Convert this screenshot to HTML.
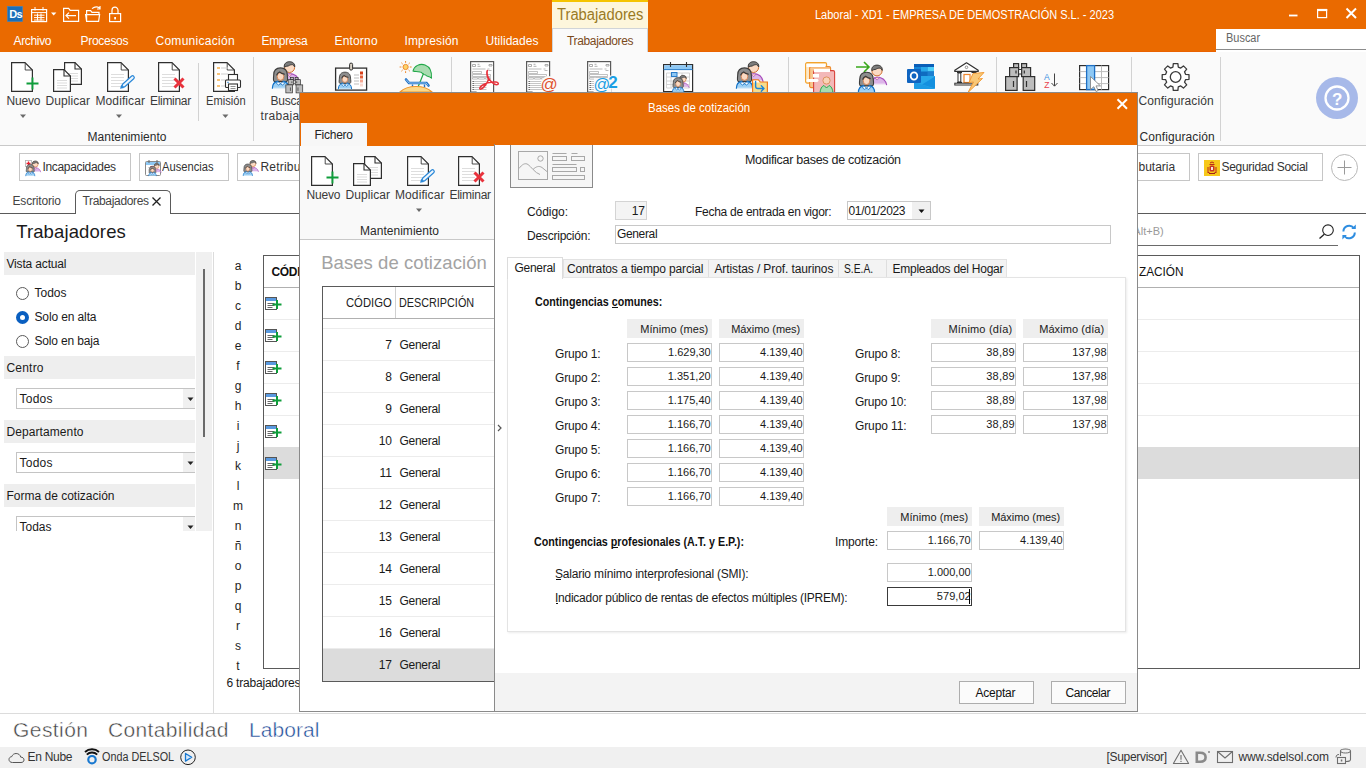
<!DOCTYPE html>
<html lang="es">
<head>
<meta charset="utf-8">
<title>Laboral - XD1 - EMPRESA DE DEMOSTRACIÓN S.L. - 2023</title>
<style>
*{box-sizing:border-box;margin:0;padding:0}
html,body{width:1366px;height:768px;overflow:hidden;background:#fff}
body{font-family:"Liberation Sans",sans-serif;font-size:12px;color:#262626;position:relative}
.a{position:absolute}
.t{position:absolute;white-space:pre;line-height:1}
svg{position:absolute;overflow:visible}
/* ---------- main title bar ---------- */
#tb{left:0;top:0;width:1366px;height:52px;background:#ea6a00}
.mt{color:#fff;font-size:12.5px;top:35px}
/* ---------- ribbon ---------- */
#rb{left:0;top:52px;width:1366px;height:94px;background:#fafafa;border-bottom:1px solid #c9c9c9}
.rl{font-size:12px;color:#3c3c3c;top:95px}
.vs{position:absolute;width:1px;background:#d2d2d2}
.btn{position:absolute;top:153px;height:28px;border:1px solid #c6c6c6;background:#fff}
.btn .t{top:7px;font-size:12px;color:#333}
/* ---------- left panel ---------- */
.ph{position:absolute;left:4px;width:191px;height:23px;background:#eee}
.ph .t{left:3px;top:5px;font-size:12px;color:#1e1e1e}
.rd{position:absolute;left:16px;width:13px;height:13px;border:1px solid #5a5a5a;border-radius:50%;background:#fff}
.cb{position:absolute;left:16px;width:179px;height:21px;border:1px solid #c4c4c4;border-right:none;background:#fff}
.cb .t{left:3px;top:4px;font-size:12px;letter-spacing:.4px;color:#1e1e1e}
.cb i{position:absolute;right:0;top:0;width:12px;height:19px;background:#f0f0f0}
.cb i:after{content:"";position:absolute;left:3px;top:9px;border:3px solid transparent;border-top:3px solid #222;border-bottom:none}
.lt{position:absolute;left:232px;width:12px;text-align:center;font-size:12px;color:#1e1e1e;line-height:1}
/* ---------- dialog ---------- */
#dlg{left:299px;top:92px;width:839px;height:620px;background:#fff;border:1px solid #8a8a8a}
.in{position:absolute;height:18px;border:1px solid #c4c4c4;background:#fff;font-size:12px;text-align:right;padding:1px 3px 0 0;line-height:14px;color:#1a1a1a;white-space:pre}
.hd{position:absolute;height:18px;background:#efefef;font-size:12px;text-align:right;padding:2px 4px 0 0;line-height:14px;color:#1a1a1a;white-space:pre}
.lb{position:absolute;font-size:12px;color:#1a1a1a;white-space:pre;line-height:1;letter-spacing:.3px}
.row{position:absolute;left:0;width:171px;height:32px;border-bottom:1px solid #ebebeb;font-size:12px;color:#1e1e1e}
</style>
</head>
<body>
<svg width="0" height="0" style="left:0;top:0"><defs><linearGradient id="gb" x1="0" y1="0" x2="0" y2="1"><stop offset=".72" stop-color="#9dd0f4"/><stop offset="1" stop-color="#9dd0f4" stop-opacity="0"/></linearGradient><linearGradient id="gp" x1="0" y1="0" x2="0" y2="1"><stop offset=".7" stop-color="#dcb4e8"/><stop offset="1" stop-color="#dfb8ea" stop-opacity="0"/></linearGradient></defs></svg>
<div id="tb" class="a"></div>
<div class="a" style="left:0;top:51px;width:1366px;height:1px;background:#ea6200"></div>
<div class="a" style="left:0;top:52px;width:1366px;height:1px;background:#d3dae2"></div>
<div class="a" style="left:0;top:53px;width:1366px;height:1px;background:#fff"></div>
<div class="a" style="left:0;top:51px;width:66px;height:1px;background:#ea6a00"></div>
<div class="a" style="left:0;top:52px;width:66px;height:1px;background:#ea6200"></div>
<div class="a" style="left:552px;top:0;width:96px;height:28px;background:#fdf6dc;border-top:2px solid #f5c400"></div>
<div class="a" style="left:552px;top:28px;width:96px;height:25px;background:#fafafa;border:1px solid #d0d4d8;border-bottom:none"></div>
<div class="t" style="transform:scaleX(0.923);transform-origin:0 0;left:557.28px;top:7px;font-size:16px;color:#9a7a24">Trabajadores</div>
<div class="t" style="letter-spacing:-0.33px;left:566.96px;top:35px;color:#7a4a1c">Trabajadores</div>
<div class="t" style="letter-spacing:-0.32px;left:13.46px;top:35px;color:#fff">Archivo</div>
<div class="t" style="letter-spacing:-0.28px;left:80.46px;top:35px;color:#fff">Procesos</div>
<div class="t" style="letter-spacing:0.28px;left:155.46px;top:35px;color:#fff">Comunicación</div>
<div class="t" style="letter-spacing:-0.32px;left:261.46px;top:35px;color:#fff">Empresa</div>
<div class="t" style="letter-spacing:0.18px;left:334.46px;top:35px;color:#fff">Entorno</div>
<div class="t" style="letter-spacing:0.17px;left:404.46px;top:35px;color:#fff">Impresión</div>
<div class="t" style="letter-spacing:0.04px;left:485.46px;top:35px;color:#fff">Utilidades</div>
<div class="t" style="transform:scaleX(0.917);transform-origin:0 0;left:815.46px;top:9px;color:#fff">Laboral - XD1 - EMPRESA DE DEMOSTRACIÓN S.L. - 2023</div>
<div class="a" style="left:1216px;top:29px;width:150px;height:21px;background:#fff;border-bottom:1px solid #8c8c8c"></div>
<div class="a" style="left:1216px;top:50px;width:150px;height:2px;background:#fff"></div>
<div class="t" style="transform:scaleX(0.913);transform-origin:0 0;left:1226.46px;top:32px;color:#666">Buscar</div>
<svg width="1366" height="60" viewBox="0 0 1366 60" style="left:0;top:0"><rect x="7.500" y="6.500" width="15" height="15" fill="#1a6fb8" stroke="#3a86c8" stroke-width=".6"/><text x="9.300" y="18.400" font-family="Liberation Sans" font-size="11" fill="#fff" font-weight="bold" letter-spacing="-.8">Ds</text><rect x="31.6" y="9.600" width="15" height="12" fill="none" stroke="#fff" stroke-width="1.2"/><path d="M31.6 12.600h15M35 7v3.500M43 7v3.500M34 15.200h10.500M34 17.600h10.500M34 20h10.500M37.500 13.500v7M41 13.500v7" fill="none" stroke="#fff"  stroke-width="1"/><path d="M51 12.500h5.400l-2.700 3z" fill="#fff"/><path d="M63.600 21.400v-13h5l1.600 2h8.400v11z" fill="none" stroke="#fff" stroke-width="1.2"/><path d="M76 15.600h-10M69 12.600l-3 3 3 3" fill="none" stroke="#fff" stroke-width="1.2"/><path d="M86.600 21.400v-10.800h4l1.400 1.800h7v2M85.600 14.600h14l-1 6.800h-12z" fill="none" stroke="#fff" stroke-width="1.2"/><path d="M92 8.600c2.500-2 5.500-2 7.500-.6M100 6v3h-3" fill="none" stroke="#fff" stroke-width="1.2"/><rect x="109.600" y="13.600" width="11" height="8" fill="none" stroke="#fff" stroke-width="1.2"/><path d="M112 13.600v-3.400a3 3 0 0 1 6 0v3.400" fill="none" stroke="#fff" stroke-width="1.2"/><rect x="114.200" y="17" width="1.800" height="2.400" fill="#fff"/><path d="M1289 15.500h8.500" stroke="#fff" stroke-width="1.800"/><rect x="1317.600" y="9.600" width="9" height="8" fill="none" stroke="#fff" stroke-width="1.200"/><path d="M1317 10h10.200" stroke="#fff" stroke-width="2.200"/><path d="M1346.500 8.500l9.500 9.500M1356 8.500l-9.500 9.500" stroke="#fff" stroke-width="2"/></svg>
<div id="rb" class="a"></div>
<div class="vs" style="left:198px;top:63px;height:58px"></div>
<div class="vs" style="left:253px;top:57px;height:84px"></div>
<div class="vs" style="left:451px;top:57px;height:84px"></div>
<div class="vs" style="left:788px;top:57px;height:84px"></div>
<div class="vs" style="left:996px;top:57px;height:84px"></div>
<div class="vs" style="left:1131px;top:57px;height:84px"></div>
<div class="vs" style="left:1220px;top:57px;height:84px"></div>
<div class="t" style="letter-spacing:-0.15px;left:6.46px;top:95px;color:#3a3a3a">Nuevo</div>
<div class="t" style="letter-spacing:0.08px;left:45.46px;top:95px;color:#3a3a3a">Duplicar</div>
<div class="t" style="letter-spacing:0.11px;left:95.46px;top:95px;color:#3a3a3a">Modificar</div>
<div class="t" style="letter-spacing:-0.32px;left:150.06px;top:95px;color:#3a3a3a">Eliminar</div>
<div class="t" style="transform:scaleX(0.927);transform-origin:0 0;left:205.96px;top:95px;color:#3a3a3a">Emisión</div>
<div class="t" style="letter-spacing:-0.25px;left:270.46px;top:95px;color:#3a3a3a">Buscar</div>
<div class="t" style="letter-spacing:0.34px;left:260.46px;top:110px;color:#3a3a3a">trabajador</div>
<div class="t" style="letter-spacing:0.03px;left:87.46px;top:131px;color:#2a2a2a">Mantenimiento</div>
<div class="t" style="letter-spacing:0.09px;left:1138.46px;top:95px;color:#3a3a3a">Configuración</div>
<div class="t" style="letter-spacing:0.09px;left:1139.46px;top:131px;color:#2a2a2a">Configuración</div>
<svg width="1366" height="150" viewBox="0 0 1366 150" style="left:0;top:0"><path d="M20 114.500h6l-3 3.400z" fill="#6a6a6a"/><path d="M116 114.500h6l-3 3.400z" fill="#6a6a6a"/><path d="M222.4 114.500h6l-3 3.400z" fill="#6a6a6a"/><g transform="translate(11,62)"><path d="M.6.6h13.400l7.400 7.400v21.400H.6z" fill="#fff" stroke="#2f2f2f" stroke-width="1.200" stroke-linejoin="miter"/><path d="M14.200 1v7h7" fill="none" stroke="#3a3a3a" stroke-width=".9"/><path d="M21.5 15.5v12M15.5 21.5h12" stroke="#0f9d3b" stroke-width="1.9" fill="none"/></g><g transform="translate(64,62)"><path d="M.6.6h10.4l6.4 6.4v15.4H.6z" fill="#fff" stroke="#2f2f2f" stroke-width="1.2"/><path d="M11 .6v6.4h6.4" fill="none" stroke="#2f2f2f" stroke-width="1.1"/><path d="M4 11.5h10M4 14h10M4 16.5h10M4 19h10" stroke="#dcdcdc" stroke-width="1"/></g><g transform="translate(53,69)"><path d="M.6.6h10.4l6.4 6.4v15.4H.6z" fill="#fff" stroke="#2f2f2f" stroke-width="1.2"/><path d="M11 .6v6.4h6.4" fill="none" stroke="#2f2f2f" stroke-width="1.1"/><path d="M4 11.5h10M4 14h10M4 16.5h10M4 19h10" stroke="#dcdcdc" stroke-width="1"/></g><g transform="translate(107,62)"><path d="M.6.6h13.400l7.400 7.400v21.400H.6z" fill="#fff" stroke="#2f2f2f" stroke-width="1.200" stroke-linejoin="miter"/><path d="M14.200 1v7h7" fill="none" stroke="#3a3a3a" stroke-width=".9"/><path d="M4 12.5h13M4 15.5h13M4 18.5h13M4 21.5h13M4 24.5h13" stroke="#dedede" stroke-width="1"/><g transform="translate(20.5,20) rotate(-42)"><path d="M-10 0l3.500-2.200v4.400z" fill="#2b88d8"/><rect x="-6.500" y="-1.700" width="15" height="3.400" rx="1.700" fill="#eef6fd" stroke="#2b88d8" stroke-width="1.200"/></g></g><g transform="translate(158,62)"><path d="M.6.6h13.400l7.400 7.400v21.400H.6z" fill="#fff" stroke="#2f2f2f" stroke-width="1.200" stroke-linejoin="miter"/><path d="M14.200 1v7h7" fill="none" stroke="#3a3a3a" stroke-width=".9"/><path d="M4 12.5h13M4 15.5h13M4 18.5h13M4 21.5h13M4 24.5h13" stroke="#dedede" stroke-width="1"/><path d="M16.5 16.5l9 9M25.5 16.5l-9 9" stroke="#e8323c" stroke-width="3" fill="none"/></g><g transform="translate(213,62)"><path d="M.6.6h13.400l7.400 7.400v21.400H.6z" fill="#fff" stroke="#2f2f2f" stroke-width="1.200" stroke-linejoin="miter"/><path d="M14.200 1v7h7" fill="none" stroke="#3a3a3a" stroke-width=".9"/><path d="M4 6h3" stroke="#f39a1e" stroke-width="1.2"/><path d="M8 6h7" stroke="#cfcfcf" stroke-width="1"/><path d="M4 12h3" stroke="#f39a1e" stroke-width="1.2"/><path d="M8 12h7" stroke="#cfcfcf" stroke-width="1"/><path d="M4 18h3" stroke="#f39a1e" stroke-width="1.2"/><path d="M8 18h7" stroke="#cfcfcf" stroke-width="1"/><path d="M4 24h3" stroke="#f39a1e" stroke-width="1.2"/><path d="M8 24h7" stroke="#cfcfcf" stroke-width="1"/><rect x="15.5" y="12.5" width="9" height="6" fill="#fff" stroke="#2f2f2f" stroke-width="1.1"/><rect x="12.5" y="18" width="15" height="7.5" rx="1" fill="#fff" stroke="#2f2f2f" stroke-width="1.1"/><rect x="15.5" y="22" width="9" height="6.5" fill="#fff" stroke="#2f2f2f" stroke-width="1.1"/><path d="M17.5 24.5h5M17.5 26.5h5" stroke="#777" stroke-width=".8"/><path d="M14.2 20.3h1.6" stroke="#2b88d8" stroke-width="1"/></g><g transform="translate(272,60)"><g transform="translate(11,7.6)"><path d="M1 14.200C1 9 3 6.600 6.500 6.200C11.500 6.200 15.200 9 16.200 14.200" fill="url(#gp)" stroke="#a64bbb" stroke-width="1.100"/><path d="M4 6.500l2.600 2.600 2.800-2.900z" fill="#fbdac3" stroke="#a64bbb" stroke-width=".7"/><circle cx="6.500" cy="-.2" r="5.100" fill="#fbdac3" stroke="#cf6f30" stroke-width="1"/><path d="M1.300 -.4C.8 -3.600 3 -5.900 6.500 -5.900C10 -5.900 12.200 -3.600 11.700 -.6C11.300 -1.800 10.600 -2.600 9.600 -2.900C8 -3 6.500 -2.600 5.400 -1.700C4 -1.500 2.400 -1.300 1.300 -.4z" fill="#7d7d7d" stroke="#3a3a3a" stroke-width="1" stroke-linejoin="round"/></g><g transform="translate(0,7.7)"><path d="M8.500 .2C3.600 .2 1.700 3.400 1.700 7.400C1.700 10.400 .5 12.400 2.300 13.900H14.700C16.500 12.400 15.300 10.400 15.300 7.400C15.300 3.400 13.400 .2 8.500 .2z" fill="#8e8e8e" stroke="#3c3c3c" stroke-width="1.100"/><ellipse cx="8.500" cy="8.700" rx="3.300" ry="3.900" fill="#fbdac3" stroke="#d8733a" stroke-width=".7"/><path d="M4.800 7.200C5.300 5.600 6.600 4.600 7.600 4.300C8.600 5.200 10.400 6.200 12.200 6.500" fill="none" stroke="#3c3c3c" stroke-width="1.300" stroke-linecap="round"/><path d="M.4 21.500C.4 16.500 2.200 14.300 5.600 13.700l2.900 2.300 2.900-2.300c3.400 .6 5.200 2.800 5.200 7.800z" fill="url(#gb)"/><path d="M.4 20.500C.5 16.300 2.300 14.300 5.600 13.700M11.400 13.700c3.300 .6 5.100 2.600 5.200 6.800" fill="none" stroke="#1272c8" stroke-width="1.200" stroke-linecap="round"/><path d="M5.600 13.700l2.900 2.300 2.900-2.300 1 2.300-2.300 1.500-1.600-1.700-1.600 1.700-2.300-1.500z" fill="#fff" stroke="#1272c8" stroke-width=".8" stroke-linejoin="round"/></g></g><g transform="translate(285.5,77) scale(0.58)"><g transform="translate(0,0)"><rect x="8.600" y=".6" width="5" height="4" fill="#bdbdbd" stroke="#2f2f2f" stroke-width="1.200"/><rect x="16.600" y=".6" width="5" height="4" fill="#bdbdbd" stroke="#2f2f2f" stroke-width="1.200"/><rect x="4.600" y="4.600" width="9" height="9" fill="#bdbdbd" stroke="#2f2f2f" stroke-width="1.200"/><rect x="16.600" y="4.600" width="9" height="9" fill="#bdbdbd" stroke="#2f2f2f" stroke-width="1.200"/><rect x="13.600" y="6.500" width="3" height="4.500" fill="#fff" stroke="#2f2f2f" stroke-width="1"/><rect x=".6" y="13.600" width="11.500" height="13.800" fill="#bdbdbd" stroke="#2f2f2f" stroke-width="1.200"/><rect x="18.200" y="13.600" width="11.500" height="13.800" fill="#bdbdbd" stroke="#2f2f2f" stroke-width="1.200"/><path d="M8.500 18v6M21.500 18v6M11 7.500v3M19.300 7.500v3" stroke="#2f2f2f" stroke-width="1.200"/></g></g><g transform="translate(335,62.5)"><rect x=".6" y="5.600" width="31" height="22" fill="#fff" stroke="#2f2f2f" stroke-width="1.3"/><rect x="14.600" y=".6" width="3" height="7" rx="1.4" fill="#d8d0c4" stroke="#2f2f2f" stroke-width="1"/><g transform="translate(3,9.5) scale(0.82)"><path d="M8.500 .2C3.600 .2 1.700 3.400 1.700 7.400C1.700 10.400 .5 12.400 2.300 13.900H14.700C16.500 12.400 15.300 10.400 15.300 7.400C15.300 3.400 13.400 .2 8.500 .2z" fill="#8e8e8e" stroke="#3c3c3c" stroke-width="1.100"/><ellipse cx="8.500" cy="8.700" rx="3.300" ry="3.900" fill="#fbdac3" stroke="#d8733a" stroke-width=".7"/><path d="M4.800 7.200C5.300 5.600 6.600 4.600 7.600 4.300C8.600 5.200 10.400 6.200 12.200 6.500" fill="none" stroke="#3c3c3c" stroke-width="1.300" stroke-linecap="round"/><path d="M.4 21.500C.4 16.500 2.200 14.300 5.600 13.700l2.900 2.300 2.900-2.300c3.400 .6 5.200 2.800 5.200 7.800z" fill="url(#gb)"/><path d="M.4 20.500C.5 16.300 2.300 14.300 5.600 13.700M11.400 13.700c3.300 .6 5.100 2.600 5.200 6.800" fill="none" stroke="#1272c8" stroke-width="1.200" stroke-linecap="round"/><path d="M5.600 13.700l2.900 2.300 2.900-2.300 1 2.300-2.300 1.500-1.600-1.700-1.600 1.700-2.300-1.500z" fill="#fff" stroke="#1272c8" stroke-width=".8" stroke-linejoin="round"/></g><path d="M19 12.500h5M19 15.500h5M19 18.500h5M19 21.500h5" stroke="#bdbdbd" stroke-width="1"/><rect x="25" y="9" width="3" height="3" fill="#d8401a"/><rect x="25" y="13" width="3" height="3" fill="#e8603a"/><rect x="25" y="17" width="3" height="3" fill="#f5a58f"/><rect x="25" y="21" width="3" height="3" fill="#fad8cf"/></g><g transform="translate(400,60)"><circle cx="5.600" cy="7" r="2.600" fill="#fbd26a" stroke="#f08a2c" stroke-width="1"/><path d="M9.8 7L11.6 7" stroke="#f08a2c" stroke-width="1"/><path d="M1.4 7L-0.4 7" stroke="#f08a2c" stroke-width="1"/><path d="M5.6 11.2L5.6 13" stroke="#f08a2c" stroke-width="1"/><path d="M5.6 2.8L5.6 1" stroke="#f08a2c" stroke-width="1"/><path d="M8.54 9.94L9.8 11.2" stroke="#f08a2c" stroke-width="1"/><path d="M2.66 9.94L1.4 11.2" stroke="#f08a2c" stroke-width="1"/><path d="M8.54 4.06L9.8 2.8" stroke="#f08a2c" stroke-width="1"/><path d="M2.66 4.06L1.4 2.8" stroke="#f08a2c" stroke-width="1"/><path d="M13 11C14 6 20 3 25 5C30 7 32 12 31.400 18C29 16 27 17 25.600 15C23 15 22 12 20 12C17 11 15 12 13 11z" fill="#a8dcb0" stroke="#22a84a" stroke-width="1.1"/><path d="M23.500 13.500L18 27" stroke="#22a84a" stroke-width="1.2"/><path d="M6 19.500l3 3.500h17.500l2 2.500" fill="none" stroke="#1f6fc4" stroke-width="2.600" stroke-linecap="round"/><path d="M6.300 19.800l2.800 3.200h17l1.800 2.200" fill="none" stroke="#9fd0f6" stroke-width=".9" stroke-linecap="round"/><path d="M12.500 24.500v3M24.500 24.500v3" stroke="#1f6fc4" stroke-width="1.4"/><path d="M0 32C4 28 10 26.500 16 26.500C22 26.500 28 28 32 32z" fill="#fbd98a" stroke="#f0962c" stroke-width="1.1"/></g><g transform="translate(470,61)"><rect x=".6" y=".6" width="23" height="33" fill="#fff" stroke="#5a5a5a" stroke-width="1.2"/><path d="M2.500 3.500h3v2h-3zM7.500 3.300h2M7.500 5.300h3M19 3.500h3v1.500h-3z" stroke="#9a9a9a" stroke-width=".8" fill="none"/><path d="M2.500 8h13M17.500 8h2M18.500 9.500h3" stroke="#a8a8a8" stroke-width=".8"/><path d="M2.500 10.500h9v2h-9zM2.500 13.500h18v2h-18zM2.500 16.500h5v1.600h-5zM8.500 16.500h6v1.600h-6zM15.500 16.500h5v1.600h-5z" stroke="#a8a8a8" stroke-width=".7" fill="none"/><path d="M2.500 20.5h14" stroke="#b8b8b8" stroke-width=".8"/><path d="M2.500 20.5h1.500" stroke="#666" stroke-width=".9"/><path d="M2.500 22.5h14" stroke="#b8b8b8" stroke-width=".8"/><path d="M2.500 22.5h1.500" stroke="#666" stroke-width=".9"/><path d="M2.500 24.5h14" stroke="#b8b8b8" stroke-width=".8"/><path d="M2.500 24.5h1.500" stroke="#666" stroke-width=".9"/><path d="M2.500 26.5h14" stroke="#b8b8b8" stroke-width=".8"/><path d="M2.500 26.5h1.500" stroke="#666" stroke-width=".9"/><path d="M2.500 28.5h14" stroke="#b8b8b8" stroke-width=".8"/><path d="M2.500 28.5h1.500" stroke="#666" stroke-width=".9"/><path d="M.6 31h6v3" fill="none" stroke="#5a5a5a" stroke-width="1"/></g><g transform="translate(470,61)"><path d="M17.500 9.500c-1.500 1-.5 6 1 9c-1.500 4-5 9-7.500 9.600c-2 .4-1.500-2 1-3.600c4-2.600 9-4 14-3.400c3 .4 3 2.600 .5 2.600c-3 0-8-5-9-9c-.8-3-.3-5.600 0-5.200z" fill="none" stroke="#e8323c" stroke-width="1.500" stroke-linejoin="round"/></g><g transform="translate(526,61)"><rect x=".6" y=".6" width="23" height="33" fill="#fff" stroke="#5a5a5a" stroke-width="1.2"/><path d="M2.500 3.500h3v2h-3zM7.500 3.300h2M7.500 5.300h3M19 3.500h3v1.500h-3z" stroke="#9a9a9a" stroke-width=".8" fill="none"/><path d="M2.500 8h13M17.500 8h2M18.500 9.500h3" stroke="#a8a8a8" stroke-width=".8"/><path d="M2.500 10.500h9v2h-9zM2.500 13.500h18v2h-18zM2.500 16.500h5v1.600h-5zM8.500 16.500h6v1.600h-6zM15.500 16.500h5v1.600h-5z" stroke="#a8a8a8" stroke-width=".7" fill="none"/><path d="M2.500 20.5h14" stroke="#b8b8b8" stroke-width=".8"/><path d="M2.500 20.5h1.500" stroke="#666" stroke-width=".9"/><path d="M2.500 22.5h14" stroke="#b8b8b8" stroke-width=".8"/><path d="M2.500 22.5h1.500" stroke="#666" stroke-width=".9"/><path d="M2.500 24.5h14" stroke="#b8b8b8" stroke-width=".8"/><path d="M2.500 24.5h1.500" stroke="#666" stroke-width=".9"/><path d="M2.500 26.5h14" stroke="#b8b8b8" stroke-width=".8"/><path d="M2.500 26.5h1.500" stroke="#666" stroke-width=".9"/><path d="M2.500 28.5h14" stroke="#b8b8b8" stroke-width=".8"/><path d="M2.500 28.5h1.500" stroke="#666" stroke-width=".9"/><path d="M.6 31h6v3" fill="none" stroke="#5a5a5a" stroke-width="1"/></g><g transform="translate(526,61)"><circle cx="22.500" cy="22.500" r="7.500" fill="#fafafa"/><text x="14.500" y="29" font-family="Liberation Sans" font-size="17" fill="#e0522e">@</text></g><g transform="translate(587,61)"><rect x=".6" y=".6" width="23" height="33" fill="#fff" stroke="#5a5a5a" stroke-width="1.2"/><path d="M2.500 3.500h3v2h-3zM7.500 3.300h2M7.500 5.300h3M19 3.500h3v1.500h-3z" stroke="#9a9a9a" stroke-width=".8" fill="none"/><path d="M2.500 8h13M17.500 8h2M18.500 9.500h3" stroke="#a8a8a8" stroke-width=".8"/><path d="M2.500 10.500h9v2h-9zM2.500 13.500h18v2h-18zM2.500 16.500h5v1.600h-5zM8.500 16.500h6v1.600h-6zM15.500 16.500h5v1.600h-5z" stroke="#a8a8a8" stroke-width=".7" fill="none"/><path d="M2.500 20.5h14" stroke="#b8b8b8" stroke-width=".8"/><path d="M2.500 20.5h1.500" stroke="#666" stroke-width=".9"/><path d="M2.500 22.5h14" stroke="#b8b8b8" stroke-width=".8"/><path d="M2.500 22.5h1.500" stroke="#666" stroke-width=".9"/><path d="M2.500 24.5h14" stroke="#b8b8b8" stroke-width=".8"/><path d="M2.500 24.5h1.500" stroke="#666" stroke-width=".9"/><path d="M2.500 26.5h14" stroke="#b8b8b8" stroke-width=".8"/><path d="M2.500 26.5h1.500" stroke="#666" stroke-width=".9"/><path d="M2.500 28.5h14" stroke="#b8b8b8" stroke-width=".8"/><path d="M2.500 28.5h1.500" stroke="#666" stroke-width=".9"/><path d="M.6 31h6v3" fill="none" stroke="#5a5a5a" stroke-width="1"/></g><g transform="translate(587,61)"><rect x="7" y="17" width="17" height="14" fill="#fafafa"/><rect x="22" y="14.500" width="9" height="13" fill="#fafafa"/><text x="6.500" y="29" font-family="Liberation Sans" font-size="16.500" fill="#1b9fe4">@</text><text x="21.300" y="26.500" font-family="Liberation Sans" font-weight="bold" font-size="17" fill="#1b9fe4">2</text></g><g transform="translate(663,60)"><rect x=".6" y="4.600" width="29" height="27" fill="#fff" stroke="#2f2f2f" stroke-width="1.2"/><rect x="1.200" y="5.200" width="27.800" height="4.300" fill="#8ec8f4"/><path d="M.6 9.600h29" stroke="#2b7cc8" stroke-width="1"/><path d="M7.500 2v5M23.500 2v5" stroke="#2f2f2f" stroke-width="1.1"/><path d="M3.500 13h23v15h-23zM3.500 17h23M3.500 21h23M3.500 24.500h23M8 13v15M13.500 13v15M19 13v15" fill="none" stroke="#cfcfcf" stroke-width=".9"/><rect x="8.500" y="12.500" width="5.500" height="4" fill="#8ec8f4" stroke="#2b7cc8" stroke-width="1"/><g transform="translate(16,19) scale(0.62)"><path d="M1 14.200C1 9 3 6.600 6.500 6.200C11.500 6.200 15.200 9 16.200 14.200" fill="url(#gp)" stroke="#a64bbb" stroke-width="1.100"/><path d="M4 6.500l2.600 2.600 2.800-2.900z" fill="#fbdac3" stroke="#a64bbb" stroke-width=".7"/><circle cx="6.500" cy="-.2" r="5.100" fill="#fbdac3" stroke="#cf6f30" stroke-width="1"/><path d="M1.300 -.4C.8 -3.600 3 -5.900 6.500 -5.900C10 -5.900 12.200 -3.600 11.700 -.6C11.300 -1.800 10.600 -2.600 9.600 -2.900C8 -3 6.500 -2.600 5.400 -1.700C4 -1.500 2.400 -1.300 1.300 -.4z" fill="#7d7d7d" stroke="#3a3a3a" stroke-width="1" stroke-linejoin="round"/></g><g transform="translate(9,17.5) scale(0.72)"><path d="M8.500 .2C3.600 .2 1.700 3.400 1.700 7.400C1.700 10.400 .5 12.400 2.300 13.900H14.700C16.500 12.400 15.300 10.400 15.300 7.400C15.300 3.400 13.400 .2 8.500 .2z" fill="#8e8e8e" stroke="#3c3c3c" stroke-width="1.100"/><ellipse cx="8.500" cy="8.700" rx="3.300" ry="3.900" fill="#fbdac3" stroke="#d8733a" stroke-width=".7"/><path d="M4.800 7.200C5.300 5.600 6.600 4.600 7.600 4.300C8.600 5.200 10.400 6.200 12.200 6.500" fill="none" stroke="#3c3c3c" stroke-width="1.300" stroke-linecap="round"/><path d="M.4 21.500C.4 16.500 2.200 14.300 5.600 13.700l2.900 2.300 2.900-2.300c3.400 .6 5.200 2.800 5.200 7.800z" fill="url(#gb)"/><path d="M.4 20.500C.5 16.300 2.300 14.300 5.600 13.700M11.400 13.700c3.300 .6 5.100 2.600 5.200 6.800" fill="none" stroke="#1272c8" stroke-width="1.200" stroke-linecap="round"/><path d="M5.600 13.700l2.900 2.300 2.900-2.300 1 2.300-2.300 1.500-1.600-1.700-1.600 1.700-2.300-1.500z" fill="#fff" stroke="#1272c8" stroke-width=".8" stroke-linejoin="round"/></g></g><g transform="translate(736,60)"><g transform="translate(11,7.6)"><path d="M1 14.200C1 9 3 6.600 6.500 6.200C11.500 6.200 15.200 9 16.200 14.200" fill="url(#gp)" stroke="#a64bbb" stroke-width="1.100"/><path d="M4 6.500l2.600 2.600 2.800-2.900z" fill="#fbdac3" stroke="#a64bbb" stroke-width=".7"/><circle cx="6.500" cy="-.2" r="5.100" fill="#fbdac3" stroke="#cf6f30" stroke-width="1"/><path d="M1.300 -.4C.8 -3.600 3 -5.900 6.500 -5.900C10 -5.900 12.200 -3.600 11.700 -.6C11.300 -1.800 10.600 -2.600 9.600 -2.900C8 -3 6.500 -2.600 5.400 -1.700C4 -1.500 2.400 -1.300 1.300 -.4z" fill="#7d7d7d" stroke="#3a3a3a" stroke-width="1" stroke-linejoin="round"/></g><g transform="translate(0,7.7)"><path d="M8.500 .2C3.600 .2 1.700 3.400 1.700 7.400C1.700 10.400 .5 12.400 2.300 13.900H14.700C16.500 12.400 15.300 10.400 15.300 7.400C15.300 3.400 13.400 .2 8.500 .2z" fill="#8e8e8e" stroke="#3c3c3c" stroke-width="1.100"/><ellipse cx="8.500" cy="8.700" rx="3.300" ry="3.900" fill="#fbdac3" stroke="#d8733a" stroke-width=".7"/><path d="M4.800 7.200C5.300 5.600 6.600 4.600 7.600 4.300C8.600 5.200 10.400 6.200 12.200 6.500" fill="none" stroke="#3c3c3c" stroke-width="1.300" stroke-linecap="round"/><path d="M.4 21.500C.4 16.500 2.200 14.300 5.600 13.700l2.900 2.300 2.900-2.300c3.400 .6 5.200 2.800 5.200 7.800z" fill="url(#gb)"/><path d="M.4 20.500C.5 16.300 2.300 14.300 5.600 13.700M11.400 13.700c3.300 .6 5.100 2.600 5.200 6.800" fill="none" stroke="#1272c8" stroke-width="1.200" stroke-linecap="round"/><path d="M5.600 13.700l2.900 2.300 2.900-2.300 1 2.300-2.300 1.500-1.600-1.700-1.600 1.700-2.300-1.500z" fill="#fff" stroke="#1272c8" stroke-width=".8" stroke-linejoin="round"/></g><path d="M16.600 33V19.900h5.800l1.700 2.100h7.300V33z" fill="#f8dc8c" stroke="#f07818" stroke-width="1.200"/><path d="M17.300 20.500h4.800l1.700 2.100h-6.500z" fill="#fff"/><path d="M19.600 21.500v4.700c0 1.500 .8 2.300 2.300 2.300h5.600M25.300 25.800l2.700 2.700-2.700 2.700" fill="none" stroke="#1b86d8" stroke-width="1.400" stroke-linecap="round" stroke-linejoin="round"/></g><g transform="translate(805,62)"><rect x=".6" y=".6" width="21" height="20.500" rx="1.500" fill="#fde9c8" stroke="#f3a32c" stroke-width="1.100"/><rect x="4.600" y="4.600" width="21" height="21" rx="1.500" fill="#f8c690" stroke="#ee8a2c" stroke-width="1.100"/><rect x="8.600" y="8.600" width="21" height="23" rx="1.500" fill="#f3b8b8" stroke="#d8423c" stroke-width="1.100"/><rect x="1.500" y="2" width="19" height="3" fill="#fff"/><rect x="9" y="7" width="16" height="3" fill="#fff"/><rect x="8" y="12" width="6" height="3.500" fill="#fff"/><rect x="1.500" y="17" width="12" height="3" rx="1.400" fill="#fff"/><circle cx="21.500" cy="18.500" r="3.600" fill="#f9d3b7" stroke="#d98b55" stroke-width=".9"/><path d="M15 32c0-5 2-8 4-8.500l2.500 2.500 2.500-2.500c2 .5 4 3.500 4 8.500z" fill="#a8dcb0" stroke="#22a84a" stroke-width="1"/></g><g transform="translate(856,60.5)"><path d="M0 6.500h12M8 1.500l5 5-5 5" fill="none" stroke="#3aa81c" stroke-width="1.600"/><g transform="translate(14.5,10.5)"><path d="M1 14.200C1 9 3 6.600 6.500 6.200C11.500 6.200 15.200 9 16.200 14.200" fill="url(#gp)" stroke="#a64bbb" stroke-width="1.100"/><path d="M4 6.500l2.600 2.600 2.800-2.900z" fill="#fbdac3" stroke="#a64bbb" stroke-width=".7"/><circle cx="6.500" cy="-.2" r="5.100" fill="#fbdac3" stroke="#cf6f30" stroke-width="1"/><path d="M1.300 -.4C.8 -3.600 3 -5.900 6.500 -5.900C10 -5.900 12.200 -3.600 11.700 -.6C11.300 -1.800 10.600 -2.600 9.600 -2.900C8 -3 6.500 -2.600 5.400 -1.700C4 -1.500 2.400 -1.300 1.300 -.4z" fill="#7d7d7d" stroke="#3a3a3a" stroke-width="1" stroke-linejoin="round"/></g><g transform="translate(2,11.5)"><path d="M8.500 .2C3.600 .2 1.700 3.400 1.700 7.400C1.700 10.400 .5 12.400 2.300 13.900H14.700C16.500 12.400 15.300 10.400 15.300 7.400C15.300 3.400 13.400 .2 8.500 .2z" fill="#8e8e8e" stroke="#3c3c3c" stroke-width="1.100"/><ellipse cx="8.500" cy="8.700" rx="3.300" ry="3.900" fill="#fbdac3" stroke="#d8733a" stroke-width=".7"/><path d="M4.800 7.200C5.300 5.600 6.600 4.600 7.600 4.300C8.600 5.200 10.400 6.200 12.200 6.500" fill="none" stroke="#3c3c3c" stroke-width="1.300" stroke-linecap="round"/><path d="M.4 21.500C.4 16.500 2.200 14.300 5.600 13.700l2.900 2.300 2.900-2.300c3.400 .6 5.200 2.800 5.200 7.800z" fill="url(#gb)"/><path d="M.4 20.500C.5 16.300 2.300 14.300 5.600 13.700M11.400 13.700c3.300 .6 5.100 2.600 5.200 6.800" fill="none" stroke="#1272c8" stroke-width="1.200" stroke-linecap="round"/><path d="M5.600 13.700l2.900 2.300 2.900-2.300 1 2.300-2.300 1.500-1.600-1.700-1.600 1.700-2.300-1.500z" fill="#fff" stroke="#1272c8" stroke-width=".8" stroke-linejoin="round"/></g></g><g transform="translate(907,62)"><rect x="7" y="2" width="20" height="12" fill="#0a5fb8"/><rect x="7" y="5" width="7" height="9" fill="#1486d8"/><rect x="14" y="5" width="6.500" height="9" fill="#28a8ea"/><rect x="20.500" y="5" width="6.500" height="4.500" fill="#50d0fa"/><rect x="20.500" y="9.500" width="6.500" height="4.500" fill="#1c7fd0"/><rect x="14" y="9.500" width="6.500" height="4.500" fill="#0f6cc0"/><path d="M7 14l21 0 0 11.500c0 1-.5 1.500-1.500 1.500h-18c-1 0-1.500-.5-1.500-1.500z" fill="#28a8ea"/><path d="M28 14.500l-13 8 13 4z" fill="#1490df"/><path d="M7 20l21 7h-19.500c-1 0-1.500-.5-1.500-1.500z" fill="#1c9ae4"/><rect x="0" y="7" width="14" height="14" rx="1" fill="#0f64c0"/><ellipse cx="7" cy="14" rx="3.300" ry="3.600" fill="none" stroke="#fff" stroke-width="1.800"/></g><g transform="translate(954,62)"><path d="M.8 8.200L12.500 .8l11.700 7.400v1.200H.8z" fill="#fff" stroke="#2f2f2f" stroke-width="1.200" stroke-linejoin="round"/><circle cx="12.500" cy="5.300" r="1.300" fill="none" stroke="#777" stroke-width=".8"/><path d="M3 10.500h5M17.500 10.500h5" stroke="#2f2f2f" stroke-width="1.200"/><rect x="4" y="11" width="2.800" height="9" fill="#fff" stroke="#2f2f2f" stroke-width="1"/><path d="M3 20.500h5" stroke="#2f2f2f" stroke-width="1.200"/><rect x="10" y="12.500" width="6" height="8" fill="#fff" stroke="#f0862c" stroke-width="1.200"/><rect x=".8" y="21.200" width="23" height="1.800" fill="#fff" stroke="#2f2f2f" stroke-width="1"/><path d="M19 11.500l11-1-6 6.500 4.500-.5-14.500 14 5.500-10.500-4.500.5z" fill="#f8c878" stroke="#f0962c" stroke-width=".9" stroke-linejoin="round"/></g><g transform="translate(1005,63)"><rect x="8.600" y=".6" width="5" height="4" fill="#bdbdbd" stroke="#2f2f2f" stroke-width="1.200"/><rect x="16.600" y=".6" width="5" height="4" fill="#bdbdbd" stroke="#2f2f2f" stroke-width="1.200"/><rect x="4.600" y="4.600" width="9" height="9" fill="#bdbdbd" stroke="#2f2f2f" stroke-width="1.200"/><rect x="16.600" y="4.600" width="9" height="9" fill="#bdbdbd" stroke="#2f2f2f" stroke-width="1.200"/><rect x="13.600" y="6.500" width="3" height="4.500" fill="#fff" stroke="#2f2f2f" stroke-width="1"/><rect x=".6" y="13.600" width="11.500" height="13.800" fill="#bdbdbd" stroke="#2f2f2f" stroke-width="1.200"/><rect x="18.200" y="13.600" width="11.500" height="13.800" fill="#bdbdbd" stroke="#2f2f2f" stroke-width="1.200"/><path d="M8.500 18v6M21.500 18v6M11 7.500v3M19.300 7.500v3" stroke="#2f2f2f" stroke-width="1.200"/></g><g transform="translate(1044,73.5)"><text x="0" y="6.500" font-family="Liberation Sans" font-size="8.500" fill="#3a8fe0">A</text><text x=".3" y="14.800" font-family="Liberation Sans" font-size="8.500" fill="#e8424c">Z</text><path d="M10.500 0v12.500M7.500 9.500l3 3.200 3-3.200" fill="none" stroke="#444" stroke-width="1"/></g><g transform="translate(1079,65)"><rect x=".6" y=".6" width="29" height="24" fill="#fff" stroke="#2f2f2f" stroke-width="1.200"/><path d="M.6 6.600h29M.6 12.600h29M.6 18.600h29M22.500 .6v24" stroke="#bdbdbd" stroke-width="1"/><rect x="7.600" y=".6" width="8" height="24" fill="#8ec8f4" stroke="#1f6fc4" stroke-width="1.300"/><path d="M11.500 11.500v13l3.300-2.800 2.200 4.800 2.200-1-2.200-4.600h4.500z" fill="#fff" stroke="#888" stroke-width=".9" stroke-linejoin="round"/></g><g transform="translate(1175.6,77)"><path d="M-2.65 -9.95L-2.30 -13.40L2.30 -13.40L2.65 -9.95L5.17 -8.91L7.85 -11.10L11.10 -7.85L8.91 -5.17L9.95 -2.65L13.40 -2.30L13.40 2.30L9.95 2.65L8.91 5.17L11.10 7.85L7.85 11.10L5.17 8.91L2.65 9.95L2.30 13.40L-2.30 13.40L-2.65 9.95L-5.17 8.91L-7.85 11.10L-11.10 7.85L-8.91 5.17L-9.95 2.65L-13.40 2.30L-13.40 -2.30L-9.95 -2.65L-8.91 -5.17L-11.10 -7.85L-7.85 -11.10L-5.17 -8.91z" fill="#fff" stroke="#3a3a3a" stroke-width="1.300" stroke-linejoin="round"/><circle cx="0" cy="0" r="5.300" fill="#fff" stroke="#3a3a3a" stroke-width="1.300"/></g><g transform="translate(1337,98)"><circle cx="0" cy="0" r="21" fill="#a7b9e9"/><circle cx="0" cy="0" r="11.500" fill="none" stroke="#fff" stroke-width="2.300"/><text x="-5" y="6.500" font-family="Liberation Sans" font-weight="bold" font-size="17" fill="#fff">?</text></g></svg>
<div class="a" style="left:19px;top:153px;width:112px;height:28px;border:1px solid #c6c6c6;background:#fff"></div>
<div class="a" style="left:139px;top:153px;width:90px;height:28px;border:1px solid #c6c6c6;background:#fff"></div>
<div class="a" style="left:237px;top:153px;width:103px;height:28px;border:1px solid #c6c6c6;background:#fff"></div>
<div class="a" style="left:1060px;top:153px;width:130px;height:28px;border:1px solid #c6c6c6;background:#fff"></div>
<div class="a" style="left:1198px;top:153px;width:125px;height:28px;border:1px solid #c6c6c6;background:#fff"></div>
<div class="t" style="letter-spacing:-0.32px;left:42.46px;top:161px;color:#333">Incapacidades</div>
<div class="t" style="transform:scaleX(0.932);transform-origin:0 0;left:162.46px;top:161px;color:#333">Ausencias</div>
<div class="t" style="left:260.5px;top:161px;color:#333;letter-spacing:.2px">Retribuciones</div>
<div class="t" style="letter-spacing:0.01px;left:1138.46px;top:161px;color:#333">butaria</div>
<div class="t" style="letter-spacing:-0.28px;left:1221.46px;top:161px;color:#333">Seguridad Social</div>
<div class="a" style="left:1331px;top:154px;width:27px;height:27px;border:1px solid #b8b8b8;border-radius:50%;background:#fff"></div>
<svg width="1366" height="40" viewBox="0 150 1366 40" style="left:0;top:150px"><path d="M1337.500 167.500h14M1344.500 160.500v14" stroke="#9a9a9a" stroke-width="1"/><g transform="translate(25,160)"><rect x=".5" y=".5" width="6" height="6" fill="#fff" stroke="#b0b0b0" stroke-width=".8"/><path d="M3.500 1.500v4M1.500 3.500h4" stroke="#e81c2c" stroke-width="1.300"/></g><g transform="translate(25.5,160) scale(0.56)"><g transform="translate(11,7.6)"><path d="M1 14.200C1 9 3 6.600 6.500 6.200C11.500 6.200 15.200 9 16.200 14.200" fill="url(#gp)" stroke="#a64bbb" stroke-width="1.100"/><path d="M4 6.500l2.600 2.600 2.800-2.900z" fill="#fbdac3" stroke="#a64bbb" stroke-width=".7"/><circle cx="6.500" cy="-.2" r="5.100" fill="#fbdac3" stroke="#cf6f30" stroke-width="1"/><path d="M1.300 -.4C.8 -3.600 3 -5.900 6.500 -5.900C10 -5.900 12.200 -3.600 11.700 -.6C11.300 -1.800 10.600 -2.600 9.600 -2.900C8 -3 6.500 -2.600 5.400 -1.700C4 -1.500 2.400 -1.300 1.300 -.4z" fill="#7d7d7d" stroke="#3a3a3a" stroke-width="1" stroke-linejoin="round"/></g><g transform="translate(0,7.7)"><path d="M8.500 .2C3.600 .2 1.700 3.400 1.700 7.400C1.700 10.400 .5 12.400 2.300 13.900H14.700C16.500 12.400 15.300 10.400 15.300 7.400C15.300 3.400 13.400 .2 8.500 .2z" fill="#8e8e8e" stroke="#3c3c3c" stroke-width="1.100"/><ellipse cx="8.500" cy="8.700" rx="3.300" ry="3.900" fill="#fbdac3" stroke="#d8733a" stroke-width=".7"/><path d="M4.800 7.200C5.300 5.600 6.600 4.600 7.600 4.300C8.600 5.200 10.400 6.200 12.200 6.500" fill="none" stroke="#3c3c3c" stroke-width="1.300" stroke-linecap="round"/><path d="M.4 21.500C.4 16.500 2.200 14.300 5.600 13.700l2.900 2.300 2.900-2.300c3.400 .6 5.200 2.800 5.200 7.800z" fill="url(#gb)"/><path d="M.4 20.500C.5 16.300 2.300 14.300 5.600 13.700M11.400 13.700c3.300 .6 5.100 2.600 5.200 6.800" fill="none" stroke="#1272c8" stroke-width="1.200" stroke-linecap="round"/><path d="M5.600 13.700l2.900 2.300 2.900-2.300 1 2.300-2.300 1.500-1.600-1.700-1.600 1.700-2.300-1.500z" fill="#fff" stroke="#1272c8" stroke-width=".8" stroke-linejoin="round"/></g></g><g transform="translate(145,160)"><rect x=".5" y="1.500" width="15" height="14" rx="1" fill="#fff" stroke="#8a8a8a" stroke-width="1"/><rect x="1" y="2" width="14" height="3" fill="#8ec8f4"/><path d="M4 0v3M12 0v3" stroke="#666" stroke-width="1"/><path d="M3 7.500h9M3 10h9M3 12.500h9M5.500 6v8M8.500 6v8" stroke="#d0d0d0" stroke-width=".8"/><rect x="5.500" y="6" width="3" height="2.500" fill="#e83c4c"/></g><g transform="translate(148.5,162.5) scale(0.47)"><g transform="translate(11,7.6)"><path d="M1 14.200C1 9 3 6.600 6.500 6.200C11.500 6.200 15.200 9 16.200 14.200" fill="url(#gp)" stroke="#a64bbb" stroke-width="1.100"/><path d="M4 6.500l2.600 2.600 2.800-2.900z" fill="#fbdac3" stroke="#a64bbb" stroke-width=".7"/><circle cx="6.500" cy="-.2" r="5.100" fill="#fbdac3" stroke="#cf6f30" stroke-width="1"/><path d="M1.300 -.4C.8 -3.600 3 -5.900 6.500 -5.900C10 -5.900 12.200 -3.600 11.700 -.6C11.300 -1.800 10.600 -2.600 9.600 -2.900C8 -3 6.500 -2.600 5.400 -1.700C4 -1.500 2.400 -1.300 1.300 -.4z" fill="#7d7d7d" stroke="#3a3a3a" stroke-width="1" stroke-linejoin="round"/></g><g transform="translate(0,7.7)"><path d="M8.500 .2C3.600 .2 1.700 3.400 1.700 7.400C1.700 10.400 .5 12.400 2.300 13.900H14.700C16.500 12.400 15.300 10.400 15.300 7.400C15.300 3.400 13.400 .2 8.500 .2z" fill="#8e8e8e" stroke="#3c3c3c" stroke-width="1.100"/><ellipse cx="8.500" cy="8.700" rx="3.300" ry="3.900" fill="#fbdac3" stroke="#d8733a" stroke-width=".7"/><path d="M4.800 7.200C5.300 5.600 6.600 4.600 7.600 4.300C8.600 5.200 10.400 6.200 12.200 6.500" fill="none" stroke="#3c3c3c" stroke-width="1.300" stroke-linecap="round"/><path d="M.4 21.500C.4 16.500 2.200 14.300 5.600 13.700l2.900 2.300 2.900-2.300c3.400 .6 5.200 2.800 5.200 7.800z" fill="url(#gb)"/><path d="M.4 20.500C.5 16.300 2.300 14.300 5.600 13.700M11.400 13.700c3.300 .6 5.100 2.600 5.200 6.800" fill="none" stroke="#1272c8" stroke-width="1.200" stroke-linecap="round"/><path d="M5.600 13.700l2.900 2.300 2.900-2.300 1 2.300-2.300 1.500-1.600-1.700-1.600 1.700-2.300-1.500z" fill="#fff" stroke="#1272c8" stroke-width=".8" stroke-linejoin="round"/></g></g><g transform="translate(243,159.5) scale(0.57)"><g transform="translate(11,7.6)"><path d="M1 14.200C1 9 3 6.600 6.500 6.200C11.500 6.200 15.200 9 16.200 14.200" fill="url(#gp)" stroke="#a64bbb" stroke-width="1.100"/><path d="M4 6.500l2.600 2.600 2.800-2.900z" fill="#fbdac3" stroke="#a64bbb" stroke-width=".7"/><circle cx="6.500" cy="-.2" r="5.100" fill="#fbdac3" stroke="#cf6f30" stroke-width="1"/><path d="M1.300 -.4C.8 -3.600 3 -5.900 6.500 -5.900C10 -5.900 12.200 -3.600 11.700 -.6C11.300 -1.800 10.600 -2.600 9.600 -2.900C8 -3 6.500 -2.600 5.400 -1.700C4 -1.500 2.400 -1.300 1.300 -.4z" fill="#7d7d7d" stroke="#3a3a3a" stroke-width="1" stroke-linejoin="round"/></g><g transform="translate(0,7.7)"><path d="M8.500 .2C3.600 .2 1.700 3.400 1.700 7.400C1.700 10.400 .5 12.400 2.300 13.900H14.700C16.500 12.400 15.300 10.400 15.300 7.400C15.300 3.400 13.400 .2 8.500 .2z" fill="#8e8e8e" stroke="#3c3c3c" stroke-width="1.100"/><ellipse cx="8.500" cy="8.700" rx="3.300" ry="3.900" fill="#fbdac3" stroke="#d8733a" stroke-width=".7"/><path d="M4.800 7.200C5.300 5.600 6.600 4.600 7.600 4.300C8.600 5.200 10.400 6.200 12.200 6.500" fill="none" stroke="#3c3c3c" stroke-width="1.300" stroke-linecap="round"/><path d="M.4 21.500C.4 16.500 2.200 14.300 5.600 13.700l2.900 2.300 2.900-2.300c3.400 .6 5.200 2.800 5.200 7.800z" fill="url(#gb)"/><path d="M.4 20.500C.5 16.300 2.300 14.300 5.600 13.700M11.400 13.700c3.300 .6 5.100 2.600 5.200 6.800" fill="none" stroke="#1272c8" stroke-width="1.200" stroke-linecap="round"/><path d="M5.600 13.700l2.900 2.300 2.900-2.300 1 2.300-2.300 1.500-1.600-1.700-1.600 1.700-2.300-1.500z" fill="#fff" stroke="#1272c8" stroke-width=".8" stroke-linejoin="round"/></g></g><g transform="translate(1204,160)"><rect width="16" height="16" fill="#f7c81a"/><path d="M5.500 4.500h5M6 3l2 -1 2 1M4 7v5M12 7v5M3.500 12.500h2M10.500 12.500h2" stroke="#b8281c" stroke-width="1" fill="none"/><rect x="5.500" y="5.500" width="5" height="6" rx="1.500" fill="#c83424"/><rect x="7" y="7" width="2" height="3" fill="#f4e4d8"/><path d="M5 13.500h6" stroke="#a02018" stroke-width="1"/></g></svg>
<div class="a" style="left:0px;top:213px;width:1366px;height:1px;background:#5a5a5a"></div>
<div class="a" style="left:75px;top:190px;width:96px;height:24px;border:1px solid #5a5a5a;border-bottom:none;border-radius:5px 5px 0 0;background:#fff"></div>
<div class="t" style="letter-spacing:-0.16px;left:12.46px;top:195px;color:#444">Escritorio</div>
<div class="t" style="letter-spacing:-0.33px;left:82.46px;top:195px;color:#444">Trabajadores</div>
<svg width="12" height="12" viewBox="0 0 12 12" style="left:151px;top:196px"><path d="M1.500 1.500l8 8M9.500 1.500l-8 8" stroke="#222" stroke-width="1.300"/></svg>
<div class="t" style="letter-spacing:0.12px;left:16.17px;top:223px;font-size:18.5px;color:#1a1a1a">Trabajadores</div>
<div class="a" style="left:4px;top:252px;width:191px;height:23px;background:#eee"></div>
<div class="t" style="letter-spacing:-0.16px;left:6.46px;top:258px;color:#1a1a1a">Vista actual</div>
<div class="a" style="left:4px;top:356px;width:191px;height:23px;background:#eee"></div>
<div class="t" style="letter-spacing:0.21px;left:6.46px;top:362px;color:#1a1a1a">Centro</div>
<div class="a" style="left:4px;top:420px;width:191px;height:23px;background:#eee"></div>
<div class="t" style="letter-spacing:0.09px;left:6.46px;top:426px;color:#1a1a1a">Departamento</div>
<div class="a" style="left:4px;top:484px;width:191px;height:23px;background:#eee"></div>
<div class="t" style="left:6.46px;top:490px;color:#1a1a1a">Forma de cotización</div>
<div class="a" style="left:15.5px;top:286.5px;width:13px;height:13px;border-radius:50%;background:#fff;border:1px solid #5a5a5a"></div>
<div class="t" style="letter-spacing:0.01px;left:34.46px;top:287px;color:#1a1a1a">Todos</div>
<div class="a" style="left:15.5px;top:310.5px;width:13px;height:13px;border-radius:50%;background:#0a5fc0;"></div>
<div class="a" style="left:19.5px;top:314.5px;width:5px;height:5px;border-radius:50%;background:#fff;"></div>
<div class="t" style="letter-spacing:-0.12px;left:34.46px;top:311px;color:#1a1a1a">Solo en alta</div>
<div class="a" style="left:15.5px;top:334.5px;width:13px;height:13px;border-radius:50%;background:#fff;border:1px solid #5a5a5a"></div>
<div class="t" style="letter-spacing:-0.15px;left:34.46px;top:335px;color:#1a1a1a">Solo en baja</div>
<div class="a" style="left:16px;top:388px;width:179px;height:21px;border:1px solid #c4c4c4;border-right:none;background:#fff"></div>
<div class="a" style="left:183px;top:389px;width:12px;height:19px;background:#f0f0f0"></div>
<svg width="8" height="5" viewBox="0 0 8 5" style="left:187px;top:397px"><path d="M.5 .5h6l-3 3.500z" fill="#222"/></svg>
<div class="t" style="letter-spacing:0.26px;left:19.46px;top:393px;color:#1a1a1a">Todos</div>
<div class="a" style="left:16px;top:452px;width:179px;height:21px;border:1px solid #c4c4c4;border-right:none;background:#fff"></div>
<div class="a" style="left:183px;top:453px;width:12px;height:19px;background:#f0f0f0"></div>
<svg width="8" height="5" viewBox="0 0 8 5" style="left:187px;top:461px"><path d="M.5 .5h6l-3 3.500z" fill="#222"/></svg>
<div class="t" style="letter-spacing:0.26px;left:19.46px;top:457px;color:#1a1a1a">Todos</div>
<div class="a" style="left:16px;top:516px;width:179px;height:15px;border:1px solid #c4c4c4;border-right:none;background:#fff;border-bottom:none"></div>
<div class="a" style="left:183px;top:517px;width:12px;height:14px;background:#f0f0f0"></div>
<svg width="8" height="5" viewBox="0 0 8 5" style="left:187px;top:525px"><path d="M.5 .5h6l-3 3.500z" fill="#222"/></svg>
<div class="a" style="left:16px;top:516px;width:179px;height:15px;overflow:hidden"><div class="t" style="letter-spacing:0.01px;left:3.46px;top:5px;color:#1a1a1a">Todas</div></div>
<div class="a" style="left:196px;top:252px;width:16px;height:279px;background:#f0f0f0"></div>
<div class="a" style="left:203px;top:269px;width:2px;height:168px;background:#6a6a6a"></div>
<div class="a" style="left:213px;top:252px;width:1px;height:461px;background:#dcdcdc"></div>
<div class="lt" style="top:260px">a</div>
<div class="lt" style="top:280px">b</div>
<div class="lt" style="top:300px">c</div>
<div class="lt" style="top:320px">d</div>
<div class="lt" style="top:340px">e</div>
<div class="lt" style="top:360px">f</div>
<div class="lt" style="top:380px">g</div>
<div class="lt" style="top:400px">h</div>
<div class="lt" style="top:420px">i</div>
<div class="lt" style="top:440px">j</div>
<div class="lt" style="top:460px">k</div>
<div class="lt" style="top:480px">l</div>
<div class="lt" style="top:500px">m</div>
<div class="lt" style="top:520px">n</div>
<div class="lt" style="top:540px">ñ</div>
<div class="lt" style="top:560px">o</div>
<div class="lt" style="top:580px">p</div>
<div class="lt" style="top:600px">q</div>
<div class="lt" style="top:620px">r</div>
<div class="lt" style="top:640px">s</div>
<div class="lt" style="top:660px">t</div>
<div class="a" style="left:263px;top:255px;width:1097px;height:414px;border:1px solid #5a5a5a;background:#fff"></div>
<div class="a" style="left:264px;top:287px;width:1095px;height:1px;background:#b0b0b0"></div>
<div class="t" style="letter-spacing:-0.32px;left:271.46px;top:266px;color:#111;font-weight:bold">CÓDIGO</div>
<div class="t" style="transform:scaleX(0.905);transform-origin:0 0;left:1138.91px;top:265px;font-size:13px;color:#111">ZACIÓN</div>
<div class="a" style="left:264px;top:319px;width:1095px;height:1px;background:#ececec"></div>
<div class="a" style="left:264px;top:351px;width:1095px;height:1px;background:#ececec"></div>
<div class="a" style="left:264px;top:383px;width:1095px;height:1px;background:#ececec"></div>
<div class="a" style="left:264px;top:415px;width:1095px;height:1px;background:#ececec"></div>
<div class="a" style="left:264px;top:447px;width:1095px;height:1px;background:#ececec"></div>
<div class="a" style="left:264px;top:447px;width:1095px;height:32px;background:#dcdcdc"></div>
<svg width="30" height="220" viewBox="260 290 30 220" style="left:260px;top:290px"><g transform="translate(265,297)"><rect x=".5" y=".5" width="11" height="12" fill="#fff" stroke="#555" stroke-width="1"/><rect x="1" y="1" width="10" height="3" fill="#5a9ae0"/><path d="M2.500 6.500h7M2.500 8.500h7M2.500 10.500h5" stroke="#555" stroke-width=".9"/><path d="M12 3v9M7.500 7.500h9" stroke="#0f9d3b" stroke-width="2"/></g><g transform="translate(265,329)"><rect x=".5" y=".5" width="11" height="12" fill="#fff" stroke="#555" stroke-width="1"/><rect x="1" y="1" width="10" height="3" fill="#5a9ae0"/><path d="M2.500 6.500h7M2.500 8.500h7M2.500 10.500h5" stroke="#555" stroke-width=".9"/><path d="M12 3v9M7.500 7.500h9" stroke="#0f9d3b" stroke-width="2"/></g><g transform="translate(265,361)"><rect x=".5" y=".5" width="11" height="12" fill="#fff" stroke="#555" stroke-width="1"/><rect x="1" y="1" width="10" height="3" fill="#5a9ae0"/><path d="M2.500 6.500h7M2.500 8.500h7M2.500 10.500h5" stroke="#555" stroke-width=".9"/><path d="M12 3v9M7.500 7.500h9" stroke="#0f9d3b" stroke-width="2"/></g><g transform="translate(265,393)"><rect x=".5" y=".5" width="11" height="12" fill="#fff" stroke="#555" stroke-width="1"/><rect x="1" y="1" width="10" height="3" fill="#5a9ae0"/><path d="M2.500 6.500h7M2.500 8.500h7M2.500 10.500h5" stroke="#555" stroke-width=".9"/><path d="M12 3v9M7.500 7.500h9" stroke="#0f9d3b" stroke-width="2"/></g><g transform="translate(265,425)"><rect x=".5" y=".5" width="11" height="12" fill="#fff" stroke="#555" stroke-width="1"/><rect x="1" y="1" width="10" height="3" fill="#5a9ae0"/><path d="M2.500 6.500h7M2.500 8.500h7M2.500 10.500h5" stroke="#555" stroke-width=".9"/><path d="M12 3v9M7.500 7.500h9" stroke="#0f9d3b" stroke-width="2"/></g><g transform="translate(265,457)"><rect x=".5" y=".5" width="11" height="12" fill="#fff" stroke="#555" stroke-width="1"/><rect x="1" y="1" width="10" height="3" fill="#5a9ae0"/><path d="M2.500 6.500h7M2.500 8.500h7M2.500 10.500h5" stroke="#555" stroke-width=".9"/><path d="M12 3v9M7.500 7.500h9" stroke="#0f9d3b" stroke-width="2"/></g></svg>
<div class="a" style="left:1100px;top:245px;width:238px;height:1px;background:#6a6a6a"></div>
<div class="t" style="letter-spacing:0.04px;left:1092.01px;top:226px;font-size:11px;color:#9a9a9a">Buscar (Alt+B)</div>
<svg width="50" height="22" viewBox="1315 220 50 22" style="left:1315px;top:220px"><circle cx="1328" cy="230.200" r="5.300" fill="none" stroke="#222" stroke-width="1.100"/><path d="M1324.300 234.200l-4.800 4.300" stroke="#222" stroke-width="1.300"/><path d="M1343.400 231.500a5.800 5.800 0 0 1 10.400-3.500M1354.800 232.500a5.800 5.800 0 0 1-10.400 3.500" fill="none" stroke="#2e8de0" stroke-width="2"/><path d="M1355.800 224.500v4.500h-4.500zM1342.400 239.500v-4.500h4.500z" fill="#2e8de0"/></svg>
<div class="t" style="letter-spacing:-0.2px;left:226.46px;top:677px;color:#1a1a1a">6 trabajadores</div>
<div class="a" style="left:0px;top:713px;width:1366px;height:1px;background:#dcdcdc"></div>
<div class="t" style="letter-spacing:0.42px;left:13.05px;top:719px;font-size:21px;color:#404040;-webkit-text-stroke:.45px #fff">Gestión</div>
<div class="t" style="letter-spacing:0.33px;left:108.06px;top:719px;font-size:21px;color:#404040;-webkit-text-stroke:.45px #fff">Contabilidad</div>
<div class="t" style="letter-spacing:0.06px;left:249.06px;top:719px;font-size:21px;color:#1c4a96;-webkit-text-stroke:.45px #fff">Laboral</div>
<div class="a" style="left:0px;top:747px;width:1366px;height:21px;background:#f0f0f0"></div>
<div class="t" style="letter-spacing:-0.27px;left:27.46px;top:751px;color:#333">En Nube</div>
<div class="t" style="transform:scaleX(0.9);transform-origin:0 0;left:102.46px;top:751px;color:#333">Onda DELSOL</div>
<div class="t" style="letter-spacing:-0.31px;left:1106.46px;top:751px;color:#333">[Supervisor]</div>
<div class="t" style="letter-spacing:-0.1px;left:1238.46px;top:751px;color:#333">www.sdelsol.com</div>
<svg width="1366" height="21" viewBox="0 747 1366 21" style="left:0;top:747px"><path d="M12.500 762.500c-2.500 0-3.500-1.600-3.500-3c0-1.600 1.200-2.800 2.800-2.900c.6-2 2.400-3.100 4.300-3.100c2.400 0 4.200 1.500 4.600 3.600c1.900 0 3.300 1.200 3.300 2.800c0 1.600-1.200 2.600-3 2.600z" fill="none" stroke="#555" stroke-width="1"/><circle cx="92" cy="759.700" r="3.700" fill="none" stroke="#1878d0" stroke-width="2.200"/><path d="M86.800 754.600a7.400 7.400 0 0 1 10.400 0M85 752a10.400 10.400 0 0 1 14 0" fill="none" stroke="#111" stroke-width="1.900"/><circle cx="188" cy="757.300" r="7.300" fill="none" stroke="#222" stroke-width="1"/><path d="M185.500 753.500l6.200 3.800-6.200 3.800z" fill="#d8e9fb" stroke="#1878d0" stroke-width="1.300" stroke-linejoin="round"/><path d="M1181 750.300l7.600 13.200h-15.200z" fill="none" stroke="#6e6e6e" stroke-width="1.100" stroke-linejoin="round"/><path d="M1181 755v4.800M1181 760.800v1.200" stroke="#6e6e6e" stroke-width="1.100"/><path d="M1196.800 752.800h3.200c3.600 0 5.600 1.800 5.600 4.500s-2 4.500-5.600 4.500h-3.200z" fill="none" stroke="#8a8a8a" stroke-width="2.600"/><rect x="1208" y="751" width="2" height="2" fill="#a0a0a0"/><rect x="1217.500" y="751.500" width="15" height="11" fill="none" stroke="#6e6e6e" stroke-width="1.100"/><path d="M1217.500 751.500l7.500 6.500 7.500-6.500" fill="none" stroke="#6e6e6e" stroke-width="1.100"/><path d="M1340.500 756v-5c0-1.300 2.300-2 5-2s5 .7 5 2v8.500c0 1.300-2 2-4.500 2" fill="none" stroke="#6e6e6e" stroke-width="1.100"/><path d="M1340.500 751c0 1.300 2.300 2 5 2s5-.7 5-2" fill="none" stroke="#6e6e6e" stroke-width="1"/><rect x="1337.500" y="757.500" width="8" height="6" fill="#f0f0f0" stroke="#6e6e6e" stroke-width="1.100"/><path d="M1336 757.500c0-2.500 1.500-3 3-3" fill="none" stroke="#6e6e6e" stroke-width="1"/><rect x="1340.800" y="759.500" width="1.500" height="2" fill="#6e6e6e"/></svg>
<div class="a" style="left:299px;top:92px;width:839px;height:620px;background:#fff;border:1px solid #8a8a8a"></div>
<div class="a" style="left:300px;top:93px;width:837px;height:53px;background:#ea6a00"></div>
<div class="t" style="transform:scaleX(0.919);transform-origin:0 0;left:647.94px;top:102px;font-size:12.5px;color:#fff">Bases de cotización</div>
<svg width="13" height="13" viewBox="0 0 13 13" style="left:1116px;top:98px"><path d="M1.500 1.300l9.500 9.500M11 1.300l-9.500 9.500" stroke="#fff" stroke-width="2"/></svg>
<div class="a" style="left:301px;top:123px;width:66px;height:23px;background:#f7f7f7"></div>
<div class="t" style="letter-spacing:-0.24px;left:314.46px;top:129px;color:#222">Fichero</div>
<div class="a" style="left:300px;top:146px;width:194px;height:94px;background:#f9f9f9;border-bottom:1px solid #c9c9c9"></div>
<div class="t" style="letter-spacing:-0.15px;left:306.46px;top:189px;color:#3a3a3a">Nuevo</div>
<div class="t" style="letter-spacing:0.08px;left:345.46px;top:189px;color:#3a3a3a">Duplicar</div>
<div class="t" style="letter-spacing:0.11px;left:394.96px;top:189px;color:#3a3a3a">Modificar</div>
<div class="t" style="letter-spacing:-0.25px;left:449.46px;top:189px;color:#3a3a3a">Eliminar</div>
<div class="t" style="letter-spacing:0.03px;left:359.96px;top:225px;color:#2a2a2a">Mantenimiento</div>
<svg width="200" height="70" viewBox="300 150 200 70" style="left:300px;top:150px"><g transform="translate(311,156)"><path d="M.6.6h13.400l7.400 7.400v21.400H.6z" fill="#fff" stroke="#2f2f2f" stroke-width="1.200" stroke-linejoin="miter"/><path d="M14.200 1v7h7" fill="none" stroke="#3a3a3a" stroke-width=".9"/><path d="M21.5 15.5v12M15.5 21.5h12" stroke="#0f9d3b" stroke-width="1.9" fill="none"/></g><g transform="translate(364,156)"><path d="M.6.6h10.4l6.4 6.4v15.4H.6z" fill="#fff" stroke="#2f2f2f" stroke-width="1.2"/><path d="M11 .6v6.4h6.4" fill="none" stroke="#2f2f2f" stroke-width="1.1"/><path d="M4 11.5h10M4 14h10M4 16.5h10M4 19h10" stroke="#dcdcdc" stroke-width="1"/></g><g transform="translate(353,163)"><path d="M.6.6h10.4l6.4 6.4v15.4H.6z" fill="#fff" stroke="#2f2f2f" stroke-width="1.2"/><path d="M11 .6v6.4h6.4" fill="none" stroke="#2f2f2f" stroke-width="1.1"/><path d="M4 11.5h10M4 14h10M4 16.5h10M4 19h10" stroke="#dcdcdc" stroke-width="1"/></g><g transform="translate(407,156)"><path d="M.6.6h13.400l7.400 7.400v21.400H.6z" fill="#fff" stroke="#2f2f2f" stroke-width="1.200" stroke-linejoin="miter"/><path d="M14.200 1v7h7" fill="none" stroke="#3a3a3a" stroke-width=".9"/><path d="M4 12.5h13M4 15.5h13M4 18.5h13M4 21.5h13M4 24.5h13" stroke="#dedede" stroke-width="1"/><g transform="translate(20.5,20) rotate(-42)"><path d="M-10 0l3.500-2.200v4.400z" fill="#2b88d8"/><rect x="-6.500" y="-1.700" width="15" height="3.400" rx="1.700" fill="#eef6fd" stroke="#2b88d8" stroke-width="1.200"/></g></g><g transform="translate(458,156)"><path d="M.6.6h13.400l7.400 7.400v21.400H.6z" fill="#fff" stroke="#2f2f2f" stroke-width="1.200" stroke-linejoin="miter"/><path d="M14.200 1v7h7" fill="none" stroke="#3a3a3a" stroke-width=".9"/><path d="M4 12.5h13M4 15.5h13M4 18.5h13M4 21.5h13M4 24.5h13" stroke="#dedede" stroke-width="1"/><path d="M16.5 16.5l9 9M25.5 16.5l-9 9" stroke="#e8323c" stroke-width="3" fill="none"/></g><path d="M416 208.500h6l-3 3.400z" fill="#6a6a6a"/></svg>
<div class="t" style="letter-spacing:0.06px;left:321.17px;top:254px;font-size:18.5px;color:#a3a3a3">Bases de cotización</div>
<div class="a" style="left:322px;top:286px;width:172px;height:396px;border:1px solid #5a5a5a;border-right:none;background:#fff"></div>
<div class="a" style="left:323px;top:318px;width:171px;height:1px;background:#b0b0b0"></div>
<div class="a" style="left:395px;top:287px;width:1px;height:31px;background:#d0d0d0"></div>
<div class="t" style="transform:scaleX(0.9);transform-origin:0 0;left:345.94px;top:297px;font-size:12.5px;color:#222">CÓDIGO</div>
<div class="t" style="transform:scaleX(0.865);transform-origin:0 0;left:399.44px;top:297px;font-size:12.5px;color:#222">DESCRIPCIÓN</div>
<div class="a" style="left:323px;top:328px;width:171px;height:1px;background:#ececec"></div>
<div class="a" style="left:323px;top:360px;width:171px;height:1px;background:#ececec"></div>
<div class="t" style="left:385.33px;top:339px;color:#1a1a1a">7</div>
<div class="t" style="letter-spacing:-0.27px;left:399.46px;top:339px;color:#1a1a1a">General</div>
<div class="a" style="left:323px;top:392px;width:171px;height:1px;background:#ececec"></div>
<div class="t" style="left:385.33px;top:371px;color:#1a1a1a">8</div>
<div class="t" style="letter-spacing:-0.27px;left:399.46px;top:371px;color:#1a1a1a">General</div>
<div class="a" style="left:323px;top:424px;width:171px;height:1px;background:#ececec"></div>
<div class="t" style="left:385.33px;top:403px;color:#1a1a1a">9</div>
<div class="t" style="letter-spacing:-0.27px;left:399.46px;top:403px;color:#1a1a1a">General</div>
<div class="a" style="left:323px;top:456px;width:171px;height:1px;background:#ececec"></div>
<div class="t" style="left:378.65px;top:435px;color:#1a1a1a">10</div>
<div class="t" style="letter-spacing:-0.27px;left:399.46px;top:435px;color:#1a1a1a">General</div>
<div class="a" style="left:323px;top:488px;width:171px;height:1px;background:#ececec"></div>
<div class="t" style="left:379.54px;top:467px;color:#1a1a1a">11</div>
<div class="t" style="letter-spacing:-0.27px;left:399.46px;top:467px;color:#1a1a1a">General</div>
<div class="a" style="left:323px;top:520px;width:171px;height:1px;background:#ececec"></div>
<div class="t" style="left:378.65px;top:499px;color:#1a1a1a">12</div>
<div class="t" style="letter-spacing:-0.27px;left:399.46px;top:499px;color:#1a1a1a">General</div>
<div class="a" style="left:323px;top:552px;width:171px;height:1px;background:#ececec"></div>
<div class="t" style="left:378.65px;top:531px;color:#1a1a1a">13</div>
<div class="t" style="letter-spacing:-0.27px;left:399.46px;top:531px;color:#1a1a1a">General</div>
<div class="a" style="left:323px;top:584px;width:171px;height:1px;background:#ececec"></div>
<div class="t" style="left:378.65px;top:563px;color:#1a1a1a">14</div>
<div class="t" style="letter-spacing:-0.27px;left:399.46px;top:563px;color:#1a1a1a">General</div>
<div class="a" style="left:323px;top:616px;width:171px;height:1px;background:#ececec"></div>
<div class="t" style="left:378.65px;top:595px;color:#1a1a1a">15</div>
<div class="t" style="letter-spacing:-0.27px;left:399.46px;top:595px;color:#1a1a1a">General</div>
<div class="a" style="left:323px;top:648px;width:171px;height:1px;background:#ececec"></div>
<div class="t" style="left:378.65px;top:627px;color:#1a1a1a">16</div>
<div class="t" style="letter-spacing:-0.27px;left:399.46px;top:627px;color:#1a1a1a">General</div>
<div class="a" style="left:323px;top:649px;width:171px;height:32px;background:#dcdcdc"></div>
<div class="t" style="left:378.65px;top:659px;color:#1a1a1a">17</div>
<div class="t" style="letter-spacing:-0.27px;left:399.46px;top:659px;color:#1a1a1a">General</div>
<div class="a" style="left:494px;top:144px;width:643px;height:567px;background:#fff;border:1px solid #8a8a8a;border-right:none;border-bottom:none"></div>
<div class="a" style="left:495px;top:144px;width:642px;height:1px;background:#ea6a00"></div>
<div class="a" style="left:510px;top:145px;width:83px;height:43px;background:#f6f6f6;border:1px solid #8a8a8a;border-top:none"></div>
<svg width="83" height="43" viewBox="510 145 83 43" style="left:510px;top:145px"><g fill="none" stroke="#a8a8a8" stroke-width="1"><rect x="518.500" y="151.500" width="29" height="28"/><circle cx="540.500" cy="158.500" r="2.700"/><path d="M519 168.500c3-4 6-6 9-4s7 8.500 12 10M533 169.500c3-3 6-4 9-2l5.500 4.500"/><rect x="552.500" y="156.500" width="14" height="4"/><rect x="571.500" y="156.500" width="13" height="4"/><path d="M552.500 153.500h14M571.500 153.500h6"/><rect x="552.500" y="167.500" width="24" height="4"/><rect x="580.500" y="167.500" width="4" height="4"/><path d="M552.500 164.500h24"/><rect x="552.500" y="175.500" width="32" height="4"/></g></svg>
<div class="t" style="letter-spacing:-0.28px;left:744.94px;top:154px;font-size:12.5px;color:#222">Modificar bases de cotización</div>
<svg width="6" height="8" viewBox="0 0 6 8" style="left:497px;top:424px"><path d="M1 1l3 3-3 3" fill="none" stroke="#555" stroke-width="1.200"/></svg>
<div class="t" style="letter-spacing:-0.05px;left:526.96px;top:206px;color:#1a1a1a">Código:</div>
<div class="a" style="left:615px;top:201px;width:32px;height:19px;background:#f4f4f4;border:1px solid #d4d4d4"></div>
<div class="t" style="left:631.65px;top:205px;color:#1a1a1a">17</div>
<div class="t" style="letter-spacing:-0.27px;left:694.96px;top:206px;color:#1a1a1a">Fecha de entrada en vigor:</div>
<div class="a" style="left:847px;top:201px;width:84px;height:19px;background:#fff;border:1px solid #c8c8c8"></div>
<div class="a" style="left:912px;top:202px;width:18px;height:17px;background:#f0f0f0"></div>
<svg width="8" height="5" viewBox="0 0 8 5" style="left:918px;top:209px"><path d="M.5 .5h6l-3 3.500z" fill="#111"/></svg>
<div class="t" style="letter-spacing:-0.33px;left:848.46px;top:205px;color:#1a1a1a">01/01/2023</div>
<div class="t" style="letter-spacing:-0.22px;left:526.96px;top:230px;color:#1a1a1a">Descripción:</div>
<div class="a" style="left:615px;top:225px;width:496px;height:19px;background:#fff;border:1px solid #c8c8c8"></div>
<div class="t" style="letter-spacing:-0.35px;left:616.96px;top:228px;color:#1a1a1a">General</div>
<div class="a" style="left:563px;top:259px;width:444px;height:19px;background:#f3f3f3;border:1px solid #e2e2e2;border-bottom:none"></div>
<div class="a" style="left:708px;top:260px;width:1px;height:18px;background:#dedede"></div>
<div class="a" style="left:838px;top:260px;width:1px;height:18px;background:#dedede"></div>
<div class="a" style="left:886px;top:260px;width:1px;height:18px;background:#dedede"></div>
<div class="a" style="left:507px;top:277px;width:619px;height:355px;background:#fff;border:1px solid #e4e4e4;box-shadow:1px 1px 2px #ececec"></div>
<div class="a" style="left:507px;top:257px;width:56px;height:22px;background:#fff;border:1px solid #dcdcdc;border-bottom:none"></div>
<div class="t" style="letter-spacing:-0.27px;left:514.46px;top:262px;color:#1a1a1a">General</div>
<div class="t" style="letter-spacing:-0.14px;left:566.96px;top:263px;color:#1a1a1a">Contratos a tiempo parcial</div>
<div class="t" style="letter-spacing:-0.1px;left:714.46px;top:263px;color:#1a1a1a">Artistas / Prof. taurinos</div>
<div class="t" style="transform:scaleX(0.855);transform-origin:0 0;left:844.46px;top:263px;color:#1a1a1a">S.E.A.</div>
<div class="t" style="letter-spacing:-0.24px;left:892.46px;top:263px;color:#1a1a1a">Empleados del Hogar</div>
<div class="t" style="transform:scaleX(0.892);transform-origin:0 0;left:535.26px;top:296px;color:#111;font-weight:bold">Contingencias comunes:</div>
<div class="a" style="left:612px;top:307px;width:5.5px;height:1px;background:#111"></div>
<div class="t" style="transform:scaleX(0.893);transform-origin:0 0;left:534.46px;top:536px;color:#111;font-weight:bold">Contingencias profesionales (A.T. y E.P.):</div>
<div class="a" style="left:612.3px;top:547px;width:6px;height:1px;background:#111"></div>
<div class="a" style="left:627px;top:319px;width:85px;height:19px;background:#eee"></div>
<div class="t" style="letter-spacing:0.07px;left:640.21px;top:324px;font-size:11px;color:#1a1a1a">Mínimo (mes)</div>
<div class="a" style="left:719px;top:319px;width:85px;height:19px;background:#eee"></div>
<div class="t" style="letter-spacing:-0.06px;left:731.21px;top:324px;font-size:11px;color:#1a1a1a">Máximo (mes)</div>
<div class="a" style="left:931px;top:319px;width:85px;height:19px;background:#eee"></div>
<div class="t" style="letter-spacing:0.18px;left:948.5px;top:324px;font-size:11px;color:#1a1a1a">Mínimo (día)</div>
<div class="a" style="left:1023px;top:319px;width:85px;height:19px;background:#eee"></div>
<div class="t" style="letter-spacing:0.07px;left:1039.21px;top:324px;font-size:11px;color:#1a1a1a">Máximo (día)</div>
<div class="t" style="letter-spacing:-0.16px;left:554.96px;top:348px;color:#1a1a1a">Grupo 1:</div>
<div class="a" style="left:627px;top:343px;width:85px;height:19px;background:#fff;border:1px solid #c8c8c8"></div>
<div class="t" style="letter-spacing:-0.03px;left:668.11px;top:347px;font-size:11px;color:#1a1a1a">1.629,30</div>
<div class="a" style="left:719px;top:343px;width:85px;height:19px;background:#fff;border:1px solid #c8c8c8"></div>
<div class="t" style="letter-spacing:-0.03px;left:760.11px;top:347px;font-size:11px;color:#1a1a1a">4.139,40</div>
<div class="t" style="letter-spacing:-0.16px;left:554.96px;top:372px;color:#1a1a1a">Grupo 2:</div>
<div class="a" style="left:627px;top:367px;width:85px;height:19px;background:#fff;border:1px solid #c8c8c8"></div>
<div class="t" style="letter-spacing:0.03px;left:667.69px;top:371px;font-size:11px;color:#1a1a1a">1.351,20</div>
<div class="a" style="left:719px;top:367px;width:85px;height:19px;background:#fff;border:1px solid #c8c8c8"></div>
<div class="t" style="letter-spacing:-0.03px;left:760.11px;top:371px;font-size:11px;color:#1a1a1a">4.139,40</div>
<div class="t" style="letter-spacing:-0.16px;left:554.96px;top:396px;color:#1a1a1a">Grupo 3:</div>
<div class="a" style="left:627px;top:391px;width:85px;height:19px;background:#fff;border:1px solid #c8c8c8"></div>
<div class="t" style="letter-spacing:0.03px;left:667.69px;top:395px;font-size:11px;color:#1a1a1a">1.175,40</div>
<div class="a" style="left:719px;top:391px;width:85px;height:19px;background:#fff;border:1px solid #c8c8c8"></div>
<div class="t" style="letter-spacing:-0.03px;left:760.11px;top:395px;font-size:11px;color:#1a1a1a">4.139,40</div>
<div class="t" style="letter-spacing:-0.16px;left:554.96px;top:420px;color:#1a1a1a">Grupo 4:</div>
<div class="a" style="left:627px;top:415px;width:85px;height:19px;background:#fff;border:1px solid #c8c8c8"></div>
<div class="t" style="letter-spacing:0.03px;left:667.69px;top:419px;font-size:11px;color:#1a1a1a">1.166,70</div>
<div class="a" style="left:719px;top:415px;width:85px;height:19px;background:#fff;border:1px solid #c8c8c8"></div>
<div class="t" style="letter-spacing:-0.03px;left:760.11px;top:419px;font-size:11px;color:#1a1a1a">4.139,40</div>
<div class="t" style="letter-spacing:-0.16px;left:554.96px;top:444px;color:#1a1a1a">Grupo 5:</div>
<div class="a" style="left:627px;top:439px;width:85px;height:19px;background:#fff;border:1px solid #c8c8c8"></div>
<div class="t" style="letter-spacing:0.03px;left:667.69px;top:443px;font-size:11px;color:#1a1a1a">1.166,70</div>
<div class="a" style="left:719px;top:439px;width:85px;height:19px;background:#fff;border:1px solid #c8c8c8"></div>
<div class="t" style="letter-spacing:-0.03px;left:760.11px;top:443px;font-size:11px;color:#1a1a1a">4.139,40</div>
<div class="t" style="letter-spacing:-0.16px;left:554.96px;top:468px;color:#1a1a1a">Grupo 6:</div>
<div class="a" style="left:627px;top:463px;width:85px;height:19px;background:#fff;border:1px solid #c8c8c8"></div>
<div class="t" style="letter-spacing:0.03px;left:667.69px;top:467px;font-size:11px;color:#1a1a1a">1.166,70</div>
<div class="a" style="left:719px;top:463px;width:85px;height:19px;background:#fff;border:1px solid #c8c8c8"></div>
<div class="t" style="letter-spacing:-0.03px;left:760.11px;top:467px;font-size:11px;color:#1a1a1a">4.139,40</div>
<div class="t" style="letter-spacing:-0.16px;left:554.96px;top:492px;color:#1a1a1a">Grupo 7:</div>
<div class="a" style="left:627px;top:487px;width:85px;height:19px;background:#fff;border:1px solid #c8c8c8"></div>
<div class="t" style="letter-spacing:0.03px;left:667.69px;top:491px;font-size:11px;color:#1a1a1a">1.166,70</div>
<div class="a" style="left:719px;top:487px;width:85px;height:19px;background:#fff;border:1px solid #c8c8c8"></div>
<div class="t" style="letter-spacing:-0.03px;left:760.11px;top:491px;font-size:11px;color:#1a1a1a">4.139,40</div>
<div class="t" style="letter-spacing:-0.16px;left:854.96px;top:348px;color:#1a1a1a">Grupo 8:</div>
<div class="a" style="left:931px;top:343px;width:85px;height:19px;background:#fff;border:1px solid #c8c8c8"></div>
<div class="t" style="letter-spacing:0.24px;left:986.21px;top:347px;font-size:11px;color:#1a1a1a">38,89</div>
<div class="a" style="left:1023px;top:343px;width:85px;height:19px;background:#fff;border:1px solid #c8c8c8"></div>
<div class="t" style="letter-spacing:0.17px;left:1072.21px;top:347px;font-size:11px;color:#1a1a1a">137,98</div>
<div class="t" style="letter-spacing:-0.16px;left:854.96px;top:372px;color:#1a1a1a">Grupo 9:</div>
<div class="a" style="left:931px;top:367px;width:85px;height:19px;background:#fff;border:1px solid #c8c8c8"></div>
<div class="t" style="letter-spacing:0.24px;left:986.21px;top:371px;font-size:11px;color:#1a1a1a">38,89</div>
<div class="a" style="left:1023px;top:367px;width:85px;height:19px;background:#fff;border:1px solid #c8c8c8"></div>
<div class="t" style="letter-spacing:0.17px;left:1072.21px;top:371px;font-size:11px;color:#1a1a1a">137,98</div>
<div class="t" style="letter-spacing:-0.22px;left:854.96px;top:396px;color:#1a1a1a">Grupo 10:</div>
<div class="a" style="left:931px;top:391px;width:85px;height:19px;background:#fff;border:1px solid #c8c8c8"></div>
<div class="t" style="letter-spacing:0.24px;left:986.21px;top:395px;font-size:11px;color:#1a1a1a">38,89</div>
<div class="a" style="left:1023px;top:391px;width:85px;height:19px;background:#fff;border:1px solid #c8c8c8"></div>
<div class="t" style="letter-spacing:0.17px;left:1072.21px;top:395px;font-size:11px;color:#1a1a1a">137,98</div>
<div class="t" style="letter-spacing:-0.11px;left:854.96px;top:420px;color:#1a1a1a">Grupo 11:</div>
<div class="a" style="left:931px;top:415px;width:85px;height:19px;background:#fff;border:1px solid #c8c8c8"></div>
<div class="t" style="letter-spacing:0.24px;left:986.21px;top:419px;font-size:11px;color:#1a1a1a">38,89</div>
<div class="a" style="left:1023px;top:415px;width:85px;height:19px;background:#fff;border:1px solid #c8c8c8"></div>
<div class="t" style="letter-spacing:0.17px;left:1072.21px;top:419px;font-size:11px;color:#1a1a1a">137,98</div>
<div class="a" style="left:887px;top:507px;width:85px;height:19px;background:#eee"></div>
<div class="t" style="letter-spacing:0.07px;left:900.21px;top:512px;font-size:11px;color:#1a1a1a">Mínimo (mes)</div>
<div class="a" style="left:979px;top:507px;width:85px;height:19px;background:#eee"></div>
<div class="t" style="letter-spacing:-0.06px;left:991.21px;top:512px;font-size:11px;color:#1a1a1a">Máximo (mes)</div>
<div class="t" style="letter-spacing:-0.13px;left:834.96px;top:536px;color:#1a1a1a">Importe:</div>
<div class="a" style="left:887px;top:531px;width:85px;height:19px;background:#fff;border:1px solid #c8c8c8"></div>
<div class="t" style="letter-spacing:0.03px;left:927.69px;top:535px;font-size:11px;color:#1a1a1a">1.166,70</div>
<div class="a" style="left:979px;top:531px;width:85px;height:19px;background:#fff;border:1px solid #c8c8c8"></div>
<div class="t" style="letter-spacing:-0.03px;left:1020.11px;top:535px;font-size:11px;color:#1a1a1a">4.139,40</div>
<div class="t" style="letter-spacing:-0.21px;left:554.96px;top:568px;color:#1a1a1a">Salario mínimo interprofesional (SMI):</div>
<div class="a" style="left:555.5px;top:579px;width:5.5px;height:1px;background:#111"></div>
<div class="a" style="left:887px;top:563px;width:85px;height:19px;background:#fff;border:1px solid #c8c8c8"></div>
<div class="t" style="letter-spacing:0.03px;left:927.69px;top:567px;font-size:11px;color:#1a1a1a">1.000,00</div>
<div class="t" style="letter-spacing:-0.24px;left:554.96px;top:592px;color:#1a1a1a">Indicador público de rentas de efectos múltiples (IPREM):</div>
<div class="a" style="left:555.5px;top:603px;width:2.5px;height:1px;background:#111"></div>
<div class="a" style="left:887px;top:587px;width:85px;height:19px;background:#fff;border:1px solid #3a3a3a"></div>
<div class="t" style="letter-spacing:0.04px;left:936.86px;top:591px;font-size:11px;color:#1a1a1a">579,02</div>
<div class="a" style="left:969px;top:589px;width:1px;height:15px;background:#000"></div>
<div class="a" style="left:495px;top:673px;width:642px;height:38px;background:#f3f3f3"></div>
<div class="a" style="left:959px;top:681px;width:75px;height:23px;background:#fbfbfb;border:1px solid #adadad"></div>
<div class="t" style="letter-spacing:-0.21px;left:975.46px;top:687px;color:#111">Aceptar</div>
<div class="a" style="left:1051px;top:681px;width:75px;height:23px;background:#fbfbfb;border:1px solid #adadad"></div>
<div class="t" style="letter-spacing:-0.42px;left:1065.46px;top:687px;color:#111">Cancelar</div>
</body>
</html>
